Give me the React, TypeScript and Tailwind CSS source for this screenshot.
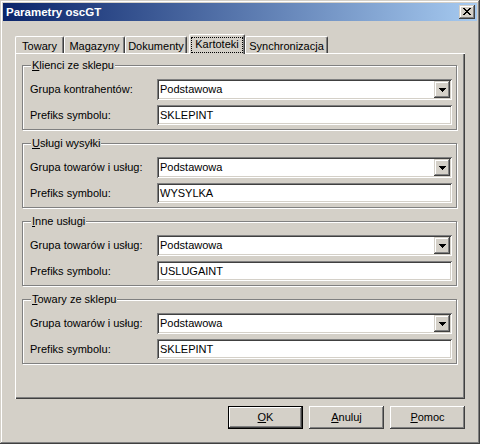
import React from "react";

function Pixels({ rows }: { rows: string[] }) {
  const w = rows[0].length;
  const h = rows.length;
  return (
    <svg width={w} height={h} viewBox={`0 0 ${w} ${h}`} shapeRendering="crispEdges" className="block">
      {rows.flatMap((r, y) =>
        r.split("").map((c, x) =>
          c === "X" ? <rect key={`${x}-${y}`} x={x} y={y} width={1} height={1} fill="#000" /> : null
        )
      )}
    </svg>
  );
}

const CLOSE = ["XX....XX", ".XX..XX.", "..XXXX..", "...XX...", "..XXXX..", ".XX..XX.", "XX....XX"];
const ARROW = ["XXXXXXX", ".XXXXX.", "..XXX..", "...X..."];

const sunken =
  "shadow-[inset_1px_1px_#808080,inset_-1px_-1px_#ffffff,inset_2px_2px_#404040,inset_-2px_-2px_#d4d0c8]";
const raisedCtl =
  "shadow-[inset_-1px_-1px_#404040,inset_1px_1px_#d4d0c8,inset_-2px_-2px_#808080,inset_2px_2px_#ffffff]";
const raisedBtn =
  "shadow-[inset_-1px_-1px_#404040,inset_1px_1px_#ffffff,inset_-2px_-2px_#808080,inset_2px_2px_#d4d0c8]";

function Tab({ label, w }: { label: string; w: string }) {
  return (
    <div
      className={`${w} h-[17px] bg-[#d4d0c8] border-l border-t border-r border-l-white border-t-white border-r-[#404040] rounded-t-[2px] shadow-[inset_-1px_0_#808080] flex items-center justify-center pt-[2px] text-[11px] leading-[13px] text-black`}
    >
      {label}
    </div>
  );
}

function Group({
  mn,
  rest,
  label,
  value,
}: {
  mn: string;
  rest: string;
  label: string;
  value: string;
}) {
  return (
    <div className="relative w-[435px] border border-[#808080] shadow-[inset_1px_1px_#ffffff,1px_1px_#ffffff] pt-[13px] pb-[4px] pl-[7px] pr-[4px] flex flex-col gap-[5px]">
      <span className="absolute top-[-7px] left-[8px] px-[1px] bg-[#d4d0c8] text-[11px] leading-[13px] text-black">
        <u className="underline-offset-[1px]">{mn}</u>
        {rest}
      </span>
      <div className="flex h-[21px] items-center">
        <div className="w-[127px] text-[11px] leading-[13px] text-black">{label}</div>
        <div className={`flex-1 h-full bg-white ${sunken} flex items-stretch`}>
          <div className="flex-1 flex items-center pl-[3px] text-[11px] leading-[13px] text-black">Podstawowa</div>
          <div className={`w-[16px] my-[2px] mr-[2px] bg-[#d4d0c8] ${raisedCtl} flex items-center justify-center`}>
            <Pixels rows={ARROW} />
          </div>
        </div>
      </div>
      <div className="flex h-[20px] items-center">
        <div className="w-[127px] text-[11px] leading-[13px] text-black">Prefiks symbolu:</div>
        <div className={`flex-1 h-full bg-white ${sunken} flex items-center pl-[3px] text-[11px] leading-[13px] text-black`}>
          {value}
        </div>
      </div>
    </div>
  );
}

function Btn({ mn, rest, def }: { mn: string; rest: string; def?: boolean }) {
  return (
    <div
      className={`w-[75px] h-[23px] bg-[#d4d0c8] flex items-center justify-center text-[11px] leading-[13px] text-black ${
        def ? "border border-black" : ""
      } ${raisedBtn}`}
    >
      <span>
        <u className="underline-offset-[1px]">{mn}</u>
        {rest}
      </span>
    </div>
  );
}

export default function App() {
  return (
    <div
      className={`w-[480px] h-[444px] overflow-hidden bg-[#d4d0c8] font-['Liberation_Sans',Arial,sans-serif] shadow-[inset_-1px_-1px_#404040,inset_1px_1px_#d4d0c8,inset_-2px_-2px_#808080,inset_2px_2px_#ffffff] pt-[3px] px-[3px] flex flex-col`}
    >
      <div className="h-[18px] flex items-center bg-[linear-gradient(to_right,#0a246a,#a6caf0)]">
        <div className="flex-1 pl-[3px] text-white font-bold text-[11.5px] leading-[14px]">Parametry oscGT</div>
        <div className={`w-[16px] h-[14px] mr-[2px] bg-[#d4d0c8] ${raisedCtl} flex items-center justify-center pb-[1px]`}>
          <Pixels rows={CLOSE} />
        </div>
      </div>
      <div className="pl-[12px] pt-[13px] flex flex-col">
        <div className="h-[19px] flex items-end">
          <Tab label="Towary" w="w-[49px]" />
          <Tab label="Magazyny" w="w-[61px]" />
          <Tab label="Dokumenty" w="w-[62px]" />
          <div className="relative z-10 ml-[2px] mb-[-1px] w-[56px] h-[20px] bg-[#d4d0c8] border-l border-t border-r border-l-white border-t-white border-r-[#404040] rounded-t-[2px] shadow-[inset_-1px_0_#808080] px-[1px] pt-[2px] pb-[1px] flex">
            <div className="flex-1 h-[16px] border border-dotted border-black flex items-center justify-center pb-[1px] text-[11px] leading-[13px] text-black">
              Kartoteki
            </div>
          </div>
          <Tab label="Synchronizacja" w="w-[83px]" />
        </div>
        <div className="w-[450px] h-[346px] shadow-[inset_1px_1px_#ffffff,inset_-1px_-1px_#404040,inset_-2px_-2px_#808080] pt-[12px] pl-[7px] flex flex-col gap-[13px]">
          <Group mn="K" rest="lienci ze sklepu" label="Grupa kontrahentów:" value="SKLEPINT" />
          <Group mn="U" rest="sługi wysyłki" label="Grupa towarów i usług:" value="WYSYLKA" />
          <Group mn="I" rest="nne usługi" label="Grupa towarów i usług:" value="USLUGAINT" />
          <Group mn="T" rest="owary ze sklepu" label="Grupa towarów i usług:" value="SKLEPINT" />
        </div>
        <div className="w-[450px] mt-[7px] flex justify-end gap-[6px]">
          <Btn mn="O" rest="K" def />
          <Btn mn="A" rest="nuluj" />
          <Btn mn="P" rest="omoc" />
        </div>
      </div>
    </div>
  );
}
